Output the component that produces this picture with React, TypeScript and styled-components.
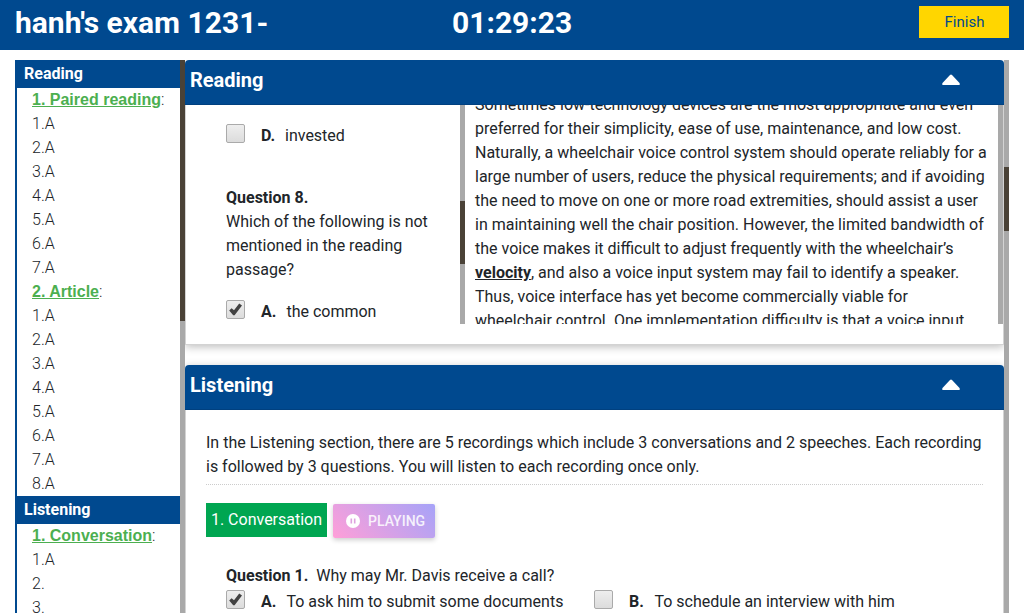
import React from 'react';
import styled, { createGlobalStyle } from 'styled-components';

const blue = '#00498f';

const Global = createGlobalStyle`
  *, *::before, *::after { box-sizing: border-box; }
  html, body { margin: 0; padding: 0; height: 613px; overflow: hidden; background: #fff; }
  body { font-family: Roboto, sans-serif; font-size: 16px; line-height: 24px; color: #212529; }
`;

const Page = styled.div`
  width: 1024px; height: 613px; display: flex; flex-direction: column; overflow: hidden;
`;
const Header = styled.header`
  height: 50px; flex: none; background: ${blue}; color: #fff; padding: 0 15px;
  display: grid; grid-template-columns: 437px 1fr auto;
`;
const Title = styled.div`
  font-size: 30px; font-weight: 700; line-height: 45px; white-space: nowrap;
`;
const Finish = styled.button`
  width: 90px; height: 32px; margin: 6px 0 0; border: 0; padding: 0 0 0 1px; background: #ffd600; color: ${blue};
  font: 400 15px/32px Roboto, sans-serif;
`;
const Body = styled.div`
  flex: 1; min-height: 0; display: flex; padding: 10px 15px 0;
`;
const Sidebar = styled.aside`
  width: 170px; flex: none; display: flex; overflow: hidden; border-left: 2px solid ${blue};
`;
const SideList = styled.div` flex: 1; min-width: 0; `;
const SideHead = styled.div`
  height: 28px; background: ${blue}; color: #fff; font-weight: 700; line-height: 27px; padding-left: 7px;
`;
const SideRow = styled.div`
  height: 24px; padding-left: 15px; font-weight: 300; white-space: nowrap;
`;
const SideLink = styled.a`
  font-family: "Liberation Sans", Arial, sans-serif; font-weight: 700; color: #4caf50; text-decoration: underline;
`;
const Track = styled.div<{ $before: number; $thumb: number }>`
  width: 5px; flex: none; background: #a9a9a9; padding-top: ${p => p.$before}px;
  &::before { content: ''; display: block; height: ${p => p.$thumb}px; background: #4a4237; }
`;
const Main = styled.main` flex: 1; min-width: 0; display: flex; overflow: hidden; `;
const Sections = styled.div` width: 819px; display: flex; flex-direction: column; gap: 20px; `;
const Card = styled.section<{ $height: number }>`
  height: ${p => p.$height}px; flex: none; border-radius: 4px 4px 0 0; background: #fff;
  box-shadow: 0 2px 8px rgba(0,0,0,.26); display: flex; flex-direction: column;
`;
const CardHead = styled.div`
  height: 45px; flex: none; background: ${blue}; color: #fff; border-radius: 4px 4px 0 0; border-bottom: 1px solid #00407f;
  display: flex; justify-content: space-between; padding: 0 43.5px 0 5px; font-size: 20px; font-weight: 700; line-height: 40px;
  svg { margin-top: 14px; }
`;
const CardBody = styled.div`
  flex: 1; border: 1px solid #d3d3d3; border-width: 0 1px 1px;
`;
const Split = styled.div` height: 219px; display: flex; overflow: hidden; `;
const Questions = styled.div` width: 274px; flex: none; padding: 19px 0 0 40px; overflow: hidden; `;
const Passage = styled.div` width: 533px; flex: none; padding-left: 10px; overflow: hidden; white-space: nowrap; `;
const PassageLines = styled.div` margin-top: -12px; u { font-weight: 700; } `;
const Strong = styled.span` font-weight: 700; `;
const Option = styled.div<{ $width?: number }>`
  display: flex; width: ${p => (p.$width ? `${p.$width}px` : 'auto')}; white-space: nowrap;
`;
const Letter = styled.span<{ $narrow: boolean }>`
  font-weight: 700; margin-left: 16px; width: ${p => (p.$narrow ? 24 : 25.4)}px;
`;
const Box = styled.span`
  width: 19px; height: 19px; border: 1px solid #aaa; border-radius: 2px; flex: none;
  background: linear-gradient(#eee, #dcdcdc); display: flex; align-items: center; justify-content: center;
`;
const Prompt = styled.div<{ $gap: number }>` margin-top: ${p => p.$gap}px; margin-bottom: 18px; `;
const Listening = styled.div` padding: 21px 20px 0; `;
const Intro = styled.p` margin: 0; padding-bottom: 5px; border-bottom: 1px dotted #ccc; white-space: nowrap; `;
const Tools = styled.div` display: flex; gap: 6px; margin-top: 18px; `;
const Tag = styled.div`
  width: 121px; height: 34px; background: #00a651; color: #fff; line-height: 34px; text-align: center; white-space: nowrap;
`;
const Play = styled.button`
  width: 102px; height: 34px; margin: 1px 0 0; border: 0; border-radius: 2px; padding: 0 0 0 13px; color: #fff;
  background: linear-gradient(45deg, #ff9fd8, #a6a3f8); box-shadow: 0 2px 5px rgba(0,0,0,.2);
  font: 500 14px/34px Roboto, sans-serif; display: flex; align-items: center; gap: 8px;
  span { opacity: .85; }
`;
const ListenQuestion = styled.div`
  padding: 26px 0 0 20px; white-space: pre;
`;
const Options = styled.div` display: flex; margin-top: 2px; `;

const Caret = () => (
  <svg width="20" height="12" viewBox="0 0 20 12"><path d="M9 1q1-1 2 0l7.5 8q1 2-1 2h-15q-2 0-1-2z" fill="#fff" /></svg>
);
const Check = ({ on }: { on?: boolean }) => (
  <Box>
    {on && <svg width="17" height="17" viewBox="0 0 17 17"><path d="M2.2 9.4L4.6 7.2L7 9.2L12.2 2.4L15 4.6L7.6 14.2H6.2z" fill="#424242" /></svg>}
  </Box>
);
const Choice = ({ letter, text, on, width }: { letter: string; text: string; on?: boolean; width?: number }) => (
  <Option $width={width}><Check on={on} /><Letter $narrow={letter === 'D'}>{letter}.</Letter><span>{text}</span></Option>
);

const outline = [
  { head: 'Reading', groups: [
    { name: '1. Paired reading', answers: ['1.A', '2.A', '3.A', '4.A', '5.A', '6.A', '7.A'] },
    { name: '2. Article', answers: ['1.A', '2.A', '3.A', '4.A', '5.A', '6.A', '7.A', '8.A'] },
  ] },
  { head: 'Listening', groups: [{ name: '1. Conversation', answers: ['1.A', '2.', '3.'] }] },
];

export default function App() {
  return (
    <Page>
      <Global />
      <Header>
        <Title>hanh's exam 1231-</Title>
        <Title>01:29:23</Title>
        <Finish>Finish</Finish>
      </Header>
      <Body>
        <Sidebar>
          <SideList>
            {outline.map(s => (
              <React.Fragment key={s.head}>
                <SideHead>{s.head}</SideHead>
                {s.groups.map(g => (
                  <React.Fragment key={g.name}>
                    <SideRow><SideLink>{g.name}</SideLink>:</SideRow>
                    {g.answers.map(a => <SideRow key={a}>{a}</SideRow>)}
                  </React.Fragment>
                ))}
              </React.Fragment>
            ))}
          </SideList>
          <Track $before={0} $thumb={261} />
        </Sidebar>
        <Main>
          <Sections>
            <Card $height={285}>
              <CardHead>Reading<Caret /></CardHead>
              <CardBody>
                <Split>
                  <Questions>
                    <Choice letter="D" text="invested" />
                    <Prompt $gap={38}>
                      <Strong>Question 8.</Strong><br />
                      Which of the following is not<br />mentioned in the reading<br />passage?
                    </Prompt>
                    <Choice letter="A" text="the common" on />
                  </Questions>
                  <Track $before={96} $thumb={63} />
                  <Passage>
                    <PassageLines>
                      Sometimes low-technology devices are the most appropriate and even<br />
                      preferred for their simplicity, ease of use, maintenance, and low cost.<br />
                      Naturally, a wheelchair voice control system should operate reliably for a<br />
                      large number of users, reduce the physical requirements; and if avoiding<br />
                      the need to move on one or more road extremities, should assist a user<br />
                      in maintaining well the chair position. However, the limited bandwidth of<br />
                      the voice makes it difficult to adjust frequently with the wheelchair’s<br />
                      <u>velocity</u>, and also a voice input system may fail to identify a speaker.<br />
                      Thus, voice interface has yet become commercially viable for<br />
                      wheelchair control. One implementation difficulty is that a voice input
                    </PassageLines>
                  </Passage>
                  <Track $before={0} $thumb={0} />
                </Split>
              </CardBody>
            </Card>
            <Card $height={260}>
              <CardHead>Listening<Caret /></CardHead>
              <CardBody>
                <Listening>
                  <Intro>
                    In the Listening section, there are 5 recordings which include 3 conversations and 2 speeches. Each recording<br />
                    is followed by 3 questions. You will listen to each recording once only.
                  </Intro>
                  <Tools>
                    <Tag>1. Conversation</Tag>
                    <Play>
                      <svg width="14" height="14" viewBox="0 0 14 14"><circle cx="7" cy="7" r="7" fill="#fff" /><path d="M5.3 4.5v5M8.7 4.5v5" stroke="#dfa2df" strokeWidth="1.6" /></svg>
                      <span>PLAYING</span>
                    </Play>
                  </Tools>
                  <ListenQuestion>
                    <Strong>Question 1.</Strong>{'  '}Why may Mr. Davis receive a call?
                    <Options>
                      <Choice letter="A" text="To ask him to submit some documents" on width={368} />
                      <Choice letter="B" text="To schedule an interview with him" />
                    </Options>
                  </ListenQuestion>
                </Listening>
              </CardBody>
            </Card>
          </Sections>
          <Track $before={107} $thumb={64} />
        </Main>
      </Body>
    </Page>
  );
}
